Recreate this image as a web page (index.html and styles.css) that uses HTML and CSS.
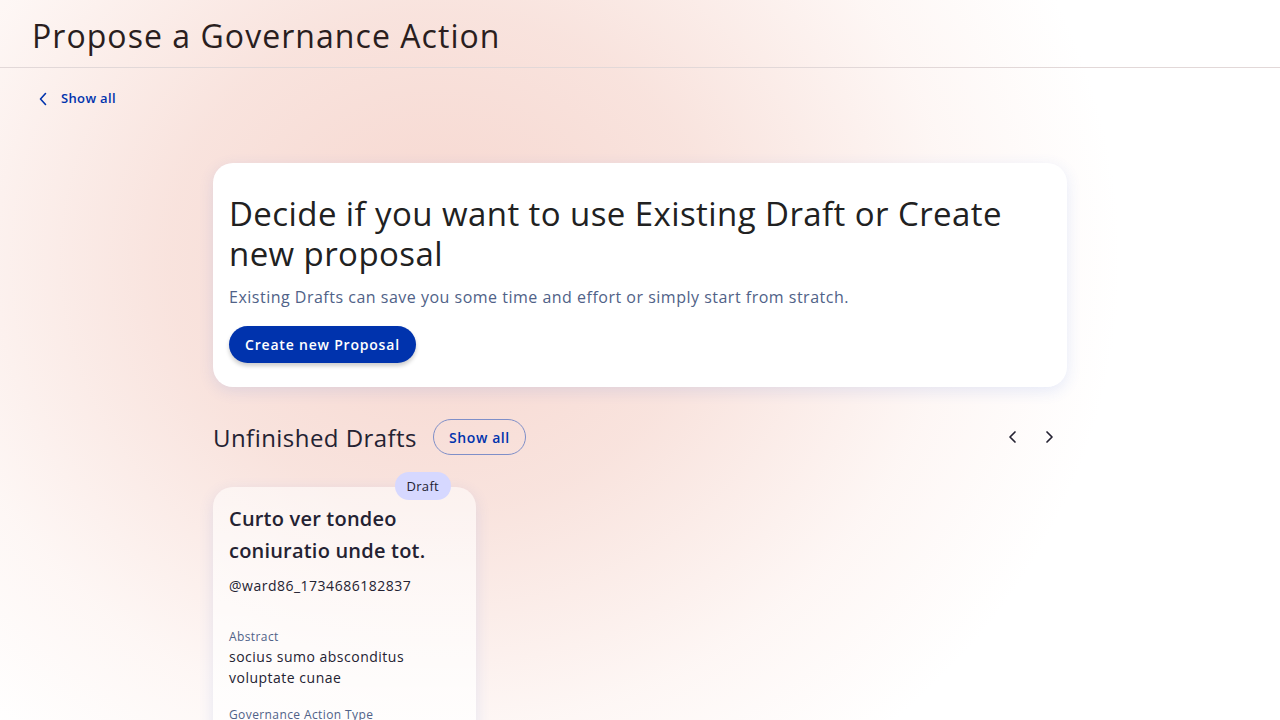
FILE: index.html
```html
<!DOCTYPE html>
<html lang="en">
<head>
<meta charset="utf-8">
<title>Propose a Governance Action</title>
<link rel="stylesheet" href="styles.css">
</head>
<body>
<div class="page">
  <header class="topbar">
    <h1 class="page-title">Propose a Governance Action</h1>
  </header>
  <nav class="back">
    <a class="back-link" href="#">
      <svg class="back-icon" width="12" height="14" viewBox="0 0 12 14"><path d="M8.5 1.5 L3.5 7 L8.5 12.5" fill="none" stroke="#0033ad" stroke-width="1.6" stroke-linecap="round" stroke-linejoin="round"/></svg>
      <span>Show all</span>
    </a>
  </nav>
  <main class="content">
    <section class="decide-card">
      <h2 class="decide-title">Decide if you want to use Existing Draft or Create new proposal</h2>
      <p class="decide-sub">Existing Drafts can save you some time and effort or simply start from stratch.</p>
      <button class="btn-primary">Create new Proposal</button>
    </section>
    <section class="drafts">
      <div class="drafts-head">
        <h3 class="drafts-title">Unfinished Drafts</h3>
        <button class="btn-outline">Show all</button>
        <div class="arrows">
          <button class="arrow"><svg width="16" height="16" viewBox="0 0 16 16"><path d="M10 3 L5 8 L10 13" fill="none" stroke="#242232" stroke-width="1.7" stroke-linecap="round" stroke-linejoin="round"/></svg></button>
          <button class="arrow"><svg width="16" height="16" viewBox="0 0 16 16"><path d="M6 3 L11 8 L6 13" fill="none" stroke="#242232" stroke-width="1.7" stroke-linecap="round" stroke-linejoin="round"/></svg></button>
        </div>
      </div>
      <div class="draft-list">
        <article class="draft-card">
          <span class="badge">Draft</span>
          <h4 class="draft-title">Curto ver tondeo coniuratio unde tot.</h4>
          <p class="draft-user">@ward86_1734686182837</p>
          <div class="field">
            <div class="field-label">Abstract</div>
            <div class="field-value">socius sumo absconditus voluptate cunae</div>
          </div>
          <div class="field">
            <div class="field-label">Governance Action Type</div>
            <div class="field-value">Info</div>
          </div>
        </article>
      </div>
    </section>
  </main>
</div>
</body>
</html>
```
FILE: styles.css
```css
* { box-sizing: border-box; }
html, body { margin: 0; padding: 0; }
body {
  font-family: "Open Sans", "Noto Sans", sans-serif;
  color: #242232;
  background: #fff;
  overflow: hidden;
}
.page {
  height: 720px;
  overflow: hidden;
  background:
    radial-gradient(ellipse 680px 620px at 440px 260px, rgba(246,212,204,0.95) 0%, rgba(247,220,213,0.8) 40%, rgba(252,238,234,0.5) 75%, rgba(255,255,255,0) 100%),
    #fff;
}
.topbar {
  height: 68px;
  border-bottom: 1px solid #e2d8d8;
  display: flex;
  align-items: center;
  padding: 3px 32px 0;
}
.page-title {
  margin: 0;
  font-size: 32px;
  font-weight: 400;
  color: #2a1e1e;
  letter-spacing: 1.05px;
}
.back { padding: 21px 0 0 37px; height: 95px; }
.back-link {
  display: inline-flex;
  align-items: center;
  gap: 12px;
  text-decoration: none;
  color: #0033ad;
  font-size: 13px;
  font-weight: 600;
  letter-spacing: 0.35px;
}
.back-icon { margin-top: 2px; }
.content {
  width: 854px;
  margin: 0 auto;
}
.decide-card {
  background: #fff;
  border-radius: 20px;
  box-shadow: 0 4px 15px rgba(47,98,220,0.12);
  padding: 31px 16px 24px;
}
.decide-title {
  margin: 0;
  font-size: 33px;
  line-height: 40px;
  font-weight: 400;
  color: #212121;
  letter-spacing: 0.42px;
}
.decide-sub {
  margin: 11px 0 17px;
  font-size: 16px;
  line-height: 24px;
  color: #506288;
  letter-spacing: 0.5px;
}
.btn-primary {
  font-family: inherit;
  border: 0;
  background: #0033ad;
  color: #fff;
  font-size: 14px;
  font-weight: 600;
  height: 37px;
  padding: 0 16px;
  border-radius: 999px;
  box-shadow: 0 3px 4px rgba(0,0,0,0.2);
  letter-spacing: 0.8px;
}
.drafts { margin-top: 32px; }
.drafts-head {
  display: flex;
  align-items: center;
  height: 36px;
}
.drafts-title {
  margin: 0 16px 0 0;
  font-size: 24px;
  font-weight: 400;
  color: #242232;
  letter-spacing: 0.45px;
}
.btn-outline {
  font-family: inherit;
  background: transparent;
  border: 1px solid #7f8fc8;
  color: #0033ad;
  font-size: 14px;
  font-weight: 600;
  height: 36px;
  padding: 0 15px;
  border-radius: 999px;
  letter-spacing: 0.6px;
}
.arrows {
  margin-left: auto;
  display: flex;
  gap: 20px;
  padding-right: 10px;
}
.arrow {
  border: 0;
  background: transparent;
  padding: 0;
  width: 16px;
  height: 16px;
  display: flex;
}
.draft-list { margin-top: 32px; display: flex; }
.draft-card {
  position: relative;
  width: 263px;
  height: 300px;
  border-radius: 20px;
  background: linear-gradient(180deg, rgba(255,255,255,0.55), rgba(255,255,255,0.85));
  box-shadow: 0 4px 15px rgba(47,98,220,0.12);
  padding: 16px 16px;
}
.badge {
  position: absolute;
  top: -15px;
  right: 25px;
  background: #d6d8ff;
  color: #242232;
  font-size: 13px;
  font-weight: 500;
  height: 28px;
  line-height: 28px;
  padding: 0 12px;
  border-radius: 999px;
  letter-spacing: 0.3px;
}
.draft-title {
  margin: 0;
  font-size: 20px;
  line-height: 32px;
  font-weight: 600;
  color: #242232;
  letter-spacing: 0.2px;
}
.draft-user {
  margin: 7px 0 0;
  font-size: 14px;
  line-height: 24px;
  color: #242232;
  letter-spacing: 0.5px;
}
.field { margin-top: 30px; }
.field + .field { margin-top: 18px; }
.field-label {
  font-size: 12px;
  line-height: 18px;
  color: #506288;
  letter-spacing: 0.4px;
}
.field-value {
  font-size: 14px;
  line-height: 21px;
  color: #242232;
  letter-spacing: 0.5px;
}
```
